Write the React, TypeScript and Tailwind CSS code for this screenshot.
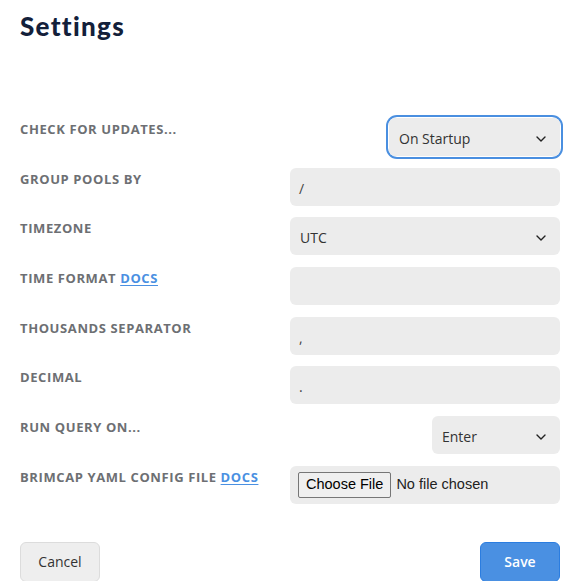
import React from 'react';

const Chevron = () => (
  <svg width="10" height="6" viewBox="0 0 10 6" fill="none" className="text-[#222]">
    <path d="M1 1l4 4 4-4" stroke="currentColor" strokeWidth="1.4" strokeLinecap="round" strokeLinejoin="round" />
  </svg>
);

const Docs = () => (
  <a href="#" className="text-[#4a90e2] underline underline-offset-2">DOCS</a>
);

interface RowProps {
  label: React.ReactNode;
  children: React.ReactNode;
}

const Row: React.FC<RowProps> = ({ label, children }) => (
  <div className="grid grid-cols-[270px_270px] h-[38px]">
    <div className="pt-[2px] text-[13px] font-bold tracking-[0.6px] text-[#6d6f73] leading-[18px]">{label}</div>
    <div className="flex justify-end">{children}</div>
  </div>
);

const Select = ({ value, width }: { value: string; width: string }) => (
  <div className={`${width} h-[38px] rounded-[6px] bg-[#ececec] flex items-center justify-between pl-[10px] pr-[14px] pt-[3px] text-[14px] text-[#333]`}>
    <span>{value}</span>
    <Chevron />
  </div>
);

const TextBox = ({ value }: { value: string }) => (
  <div className="w-[270px] h-[38px] rounded-[6px] bg-[#ececec] flex items-center pl-[9px] pt-[3px] text-[14px] text-[#444]">
    {value}
  </div>
);

export default function App() {
  return (
    <div className="w-[578px] h-[581px] overflow-hidden bg-white pl-5 font-['Open_Sans',sans-serif]">
      <h1 className="pt-[6px] text-[26px] font-black tracking-[1.3px] text-[#13203a] font-['Lato',sans-serif] leading-[40px]">Settings</h1>

      <div className="mt-[72px] flex flex-col gap-[11.7px]">
        <Row label="CHECK FOR UPDATES...">
          <div className="rounded-[8px] ring-2 ring-[#4a8fe0] ring-offset-1">
            <Select value="On Startup" width="w-[171px]" />
          </div>
        </Row>
        <Row label="GROUP POOLS BY">
          <TextBox value="/" />
        </Row>
        <Row label="TIMEZONE">
          <Select value="UTC" width="w-[270px]" />
        </Row>
        <Row label={<>TIME FORMAT <Docs /></>}>
          <TextBox value="" />
        </Row>
        <Row label="THOUSANDS SEPARATOR">
          <TextBox value="," />
        </Row>
        <Row label="DECIMAL">
          <TextBox value="." />
        </Row>
        <Row label="RUN QUERY ON...">
          <Select value="Enter" width="w-[128px]" />
        </Row>
        <Row label={<>BRIMCAP YAML CONFIG FILE <Docs /></>}>
          <div className="w-[270px] h-[38px] rounded-[6px] bg-[#ececec] flex items-center pl-[8px]">
            <input type="file" className="text-[14.5px] text-[#222] font-['Liberation_Sans',sans-serif] file:mr-[5px] file:px-[7px] file:py-[1px] file:border file:border-[#767676] file:rounded-[2px] file:bg-[#efefef] file:text-[#000]" />
          </div>
        </Row>
      </div>

      <div className="mt-[38px] flex justify-between w-[540px]">
        <button className="w-[80px] h-[40px] rounded-[6px] bg-[#eeeeee] border border-[#dcdcdc] text-[14px] text-[#333]">Cancel</button>
        <button className="w-[80px] h-[40px] rounded-[6px] bg-[#4a90e2] border border-[#2b7de0] text-[14px] font-semibold text-white">Save</button>
      </div>
    </div>
  );
}
